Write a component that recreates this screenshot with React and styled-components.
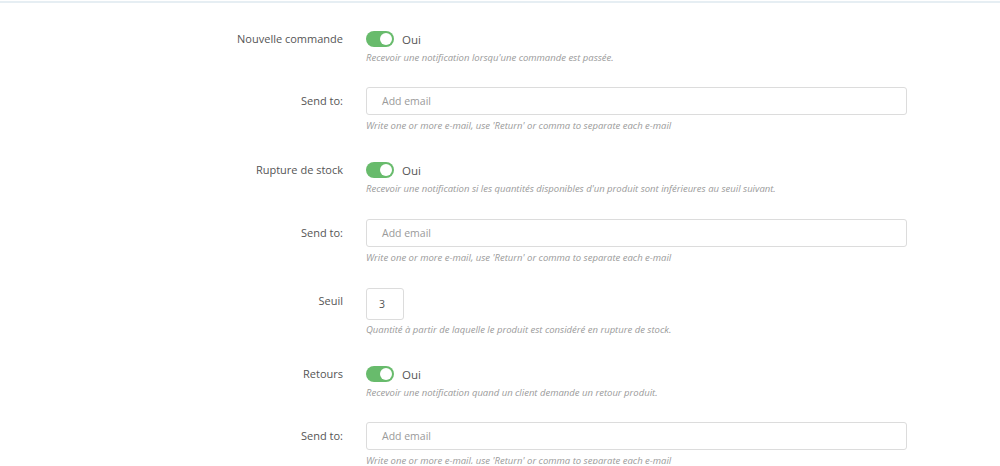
import React from "react";
import styled, { createGlobalStyle } from "styled-components";

const Global = createGlobalStyle`
  html, body { margin: 0; padding: 0; background: #fff; }
  body { font-family: "Open Sans", "Noto Sans", Arial, sans-serif; color: #555; }
  * { box-sizing: border-box; }
`;

const Panel = styled.div`
  margin-top: 1px;
  border-top: 2px solid #e6eef3;
  padding-top: 26px;
  width: 1000px;
  height: 463px;
  overflow: hidden;
`;

const Form = styled.div`
  display: grid;
  grid-template-columns: 343px 541px;
  column-gap: 23px;
  row-gap: 0;
`;

const Label = styled.div`
  text-align: right;
  font-size: 11px;
  line-height: 16px;
  color: #555;
  padding-top: ${(p) => p.$pt}px;
`;

const Control = styled.div`
  display: flex;
  flex-direction: column;
  margin-bottom: ${(p) => p.$mb}px;
`;

const SwitchLine = styled.div`
  display: flex;
  align-items: center;
  height: 20px;
  gap: 8px;
`;

const Switch = styled.span`
  position: relative;
  width: 28px;
  height: 16px;
  border-radius: 8px;
  background: #68bb6c;
  flex: none;
  &::after {
    content: "";
    position: absolute;
    top: 2px;
    right: 2px;
    width: 12px;
    height: 12px;
    border-radius: 50%;
    background: #fff;
  }
`;

const SwitchText = styled.span`
  font-size: 11.5px;
  color: #555;
`;

const Help = styled.div`
  font-size: 9.5px;
  font-style: italic;
  color: #9a9a9a;
  line-height: 16px;
  margin-top: ${(p) => p.$mt || 0}px;
  white-space: nowrap;
`;

const Input = styled.div`
  width: ${(p) => p.$w || 541}px;
  height: ${(p) => p.$h || 28}px;
  border: 1px solid #dcdcdc;
  border-radius: 3px;
  background: #fff;
  display: flex;
  align-items: center;
  padding-left: ${(p) => p.$pl || 15}px;
  font-size: 10.5px;
  color: ${(p) => (p.$value ? "#555" : "#9a9a9a")};
`;

const EMAIL_HELP =
  "Write one or more e-mail, use 'Return' or comma to separate each e-mail";

const ToggleGroup = ({ label, help, mb }) => (
  <>
    <Label $pt={2}>{label}</Label>
    <Control $mb={mb}>
      <SwitchLine>
        <Switch />
        <SwitchText>Oui</SwitchText>
      </SwitchLine>
      <Help $mt={1}>{help}</Help>
    </Control>
  </>
);

const EmailGroup = ({ mb }) => (
  <>
    <Label $pt={6}>Send to:</Label>
    <Control $mb={mb}>
      <Input>Add email</Input>
      <Help $mt={3}>{EMAIL_HELP}</Help>
    </Control>
  </>
);

export default function App() {
  return (
    <>
      <Global />
      <Panel>
        <Form>
          <ToggleGroup
            label="Nouvelle commande"
            help="Recevoir une notification lorsqu'une commande est passée."
            mb={21}
          />
          <EmailGroup mb={26} />
          <ToggleGroup
            label="Rupture de stock"
            help="Recevoir une notification si les quantités disponibles d'un produit sont inférieures au seuil suivant."
            mb={22}
          />
          <EmailGroup mb={22} />
          <Label $pt={5}>Seuil</Label>
          <Control $mb={26}>
            <Input $w={38} $h={32} $pl={12} $value>
              3
            </Input>
            <Help $mt={2}>
              Quantité à partir de laquelle le produit est considéré en rupture de stock.
            </Help>
          </Control>
          <ToggleGroup
            label="Retours"
            help="Recevoir une notification quand un client demande un retour produit."
            mb={21}
          />
          <EmailGroup mb={24} />
        </Form>
      </Panel>
    </>
  );
}
